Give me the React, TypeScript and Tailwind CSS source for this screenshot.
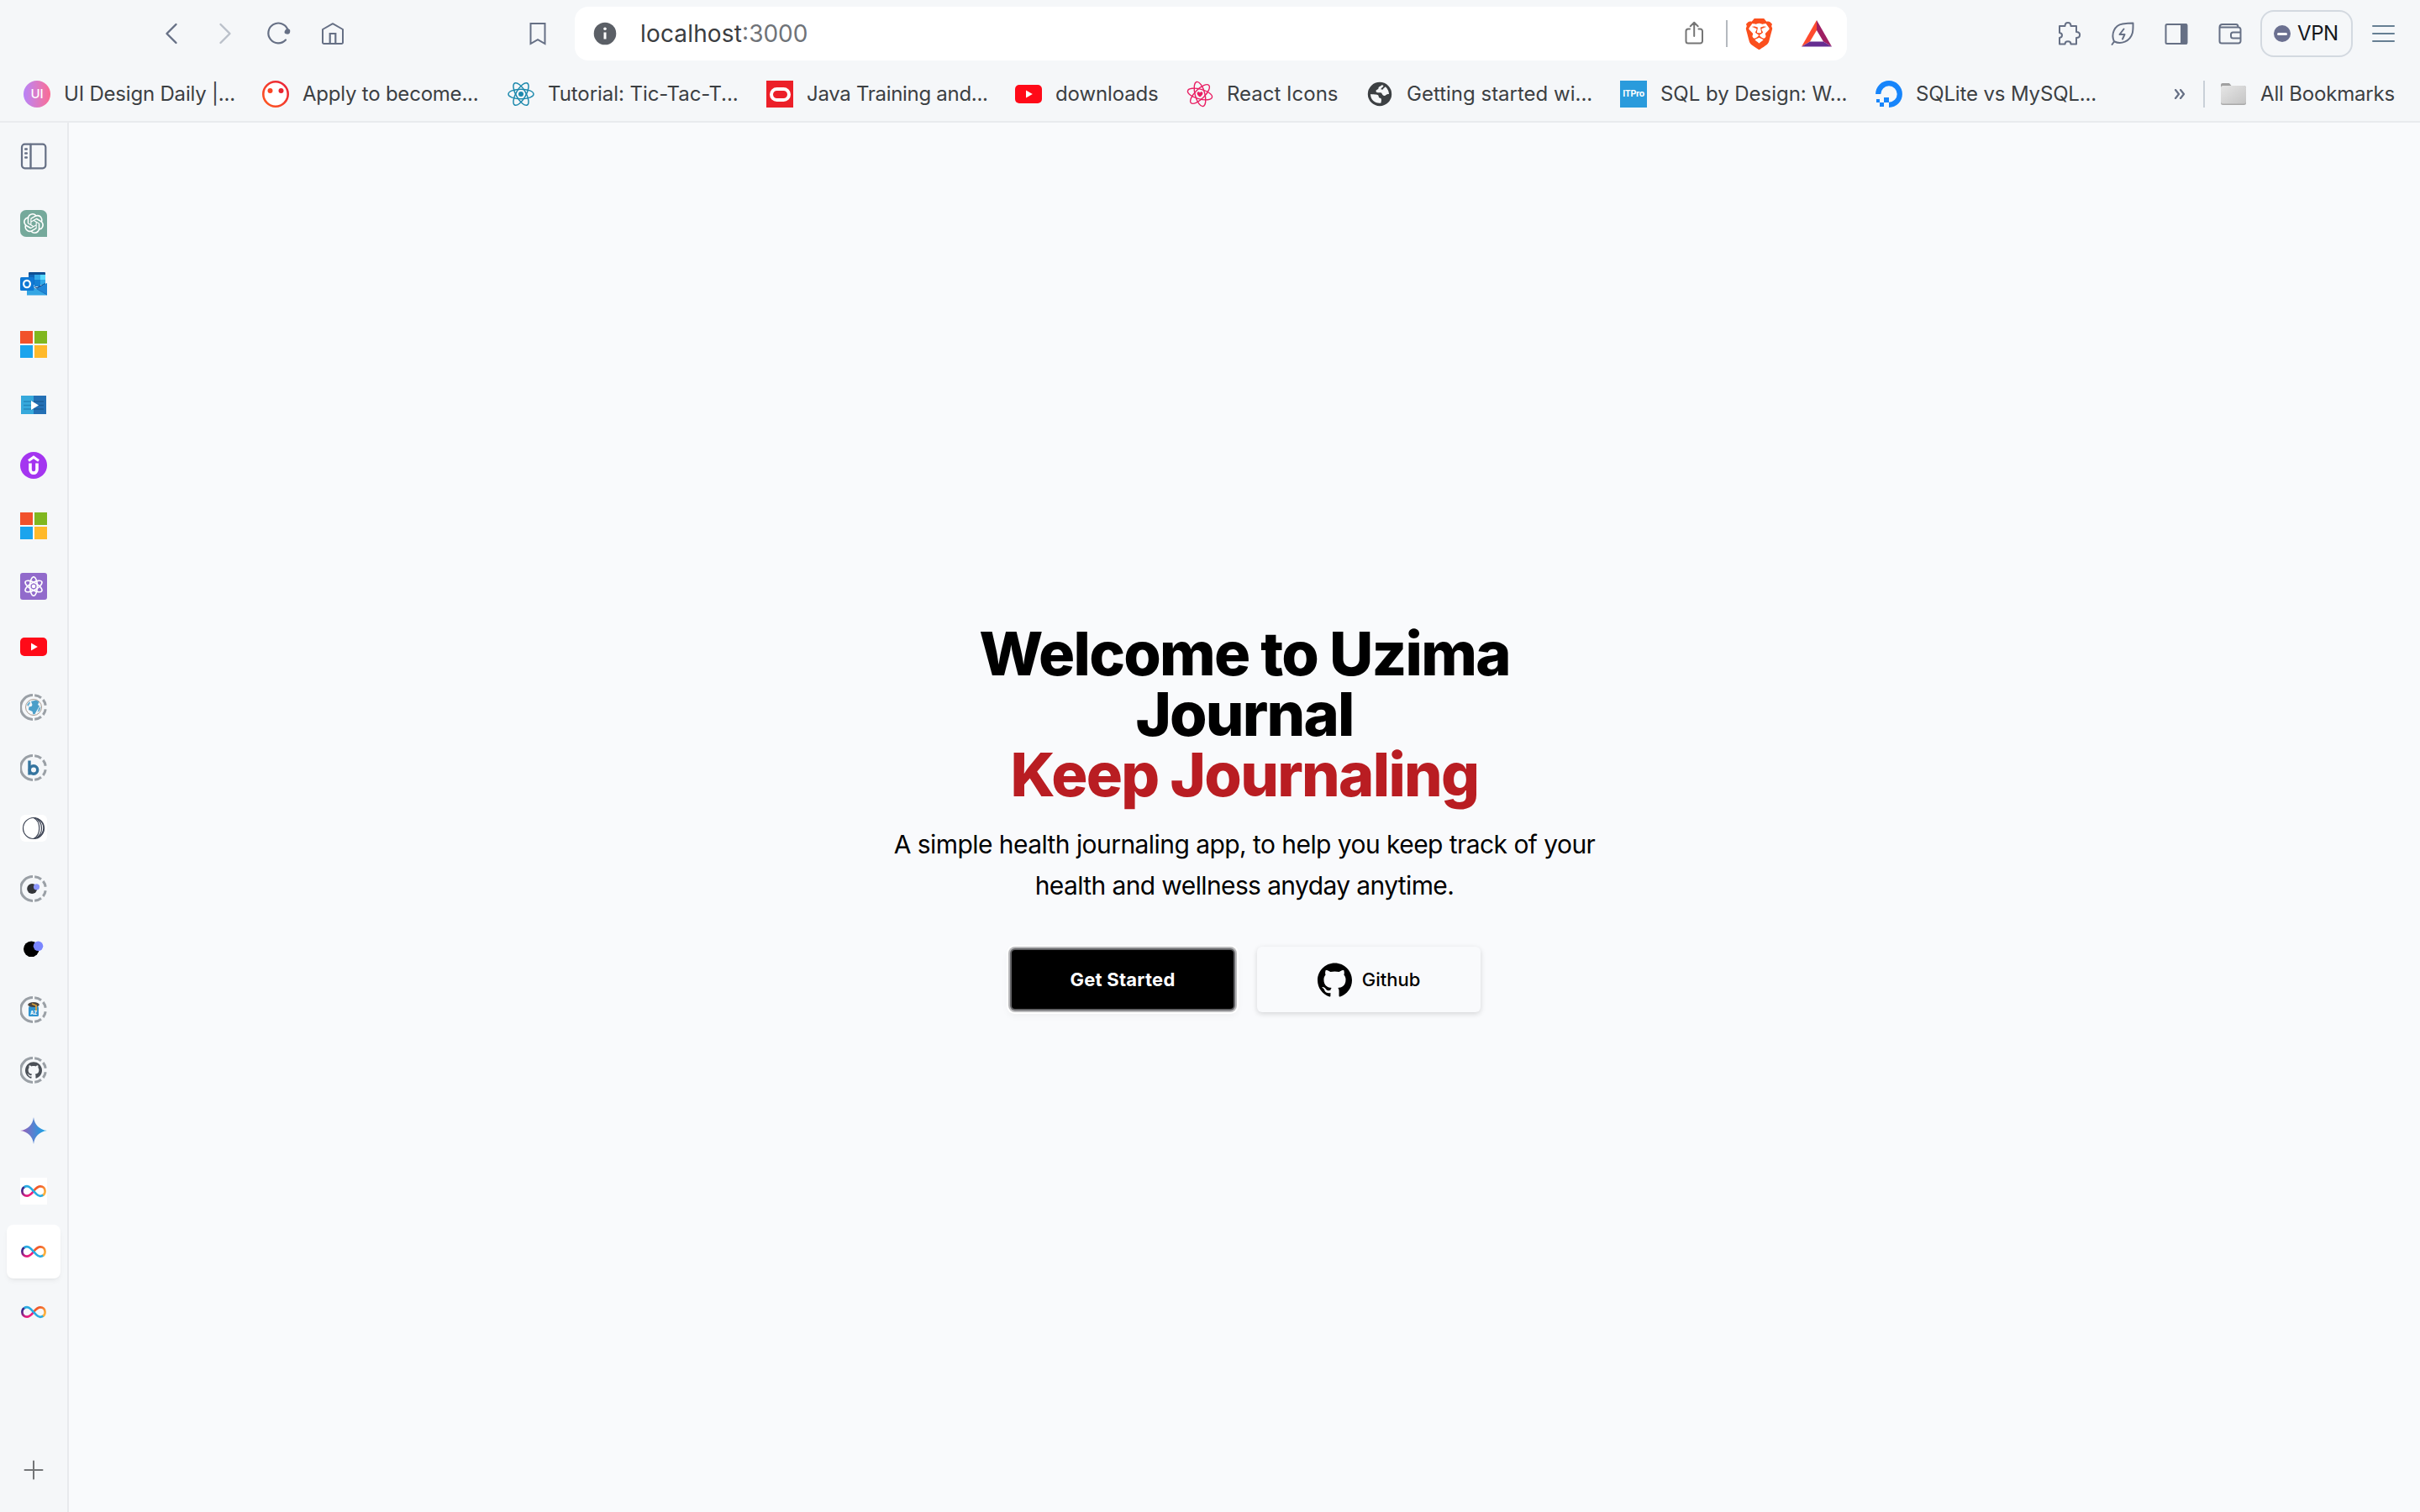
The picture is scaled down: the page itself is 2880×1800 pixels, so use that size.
import type { ReactNode } from "react";
import { SiOpenai, SiGithub, SiBrave } from "react-icons/si";

const stroke = { fill: "none", stroke: "#667085", strokeWidth: 2, strokeLinecap: "round", strokeLinejoin: "round" } as const;

function Atom({ color, className, tilt = 0, heart = false, width = 1.5 }: { color: string; className: string; tilt?: number; heart?: boolean; width?: number }) {
  return (
    <svg viewBox="0 0 32 32" className={className}>
      <g transform={`rotate(${tilt} 16 16)`} fill="none" stroke={color} strokeWidth={width}>
        <ellipse cx="16" cy="16" rx="15" ry="5.8" />
        <ellipse cx="16" cy="16" rx="15" ry="5.8" transform="rotate(60 16 16)" />
        <ellipse cx="16" cy="16" rx="15" ry="5.8" transform="rotate(120 16 16)" />
      </g>
      {heart ? (
        <path d="M16 19.6c-2.2-1.7-3.4-2.9-3.4-4.4 0-2 2.5-2.5 3.4-.8.9-1.7 3.4-1.2 3.4.8 0 1.5-1.2 2.7-3.4 4.4z" fill={color} />
      ) : (
        <circle cx="16" cy="16" r="3" fill={color} />
      )}
    </svg>
  );
}

function YouTube() {
  return (
    <svg viewBox="0 0 32 32" className="size-8">
      <rect y="5" width="32" height="22" rx="5" fill="#ff0a18" />
      <path d="M13 11.5v9l7.8-4.5z" fill="#fff" />
    </svg>
  );
}

function Microsoft() {
  return (
    <div className="grid size-8 grid-cols-2 gap-[2px]">
      <div className="bg-[#f1512b]" />
      <div className="bg-[#80b71f]" />
      <div className="bg-[#1aa4ed]" />
      <div className="bg-[#ffb92a]" />
    </div>
  );
}

function Ring({ children }: { children?: ReactNode }) {
  return (
    <svg viewBox="0 0 32 32" className="size-8">
      <g fill="none" stroke="#9aa0a6" strokeWidth="3">
        <path d="M15 1.6A14.4 14.4 0 0 0 15 30.4" />
        <path d="M17.2 1.7A14.4 14.4 0 0 1 25 4.7" />
        <path d="M27.3 7A14.4 14.4 0 0 1 30.2 13.8" />
        <path d="M17.2 30.3A14.4 14.4 0 0 0 25 27.3" />
        <path d="M27.3 25A14.4 14.4 0 0 0 30.2 18.2" />
      </g>
      {children}
    </svg>
  );
}

function Infinite({ id }: { id: string }) {
  return (
    <svg viewBox="0 0 32 32" className="size-8">
      <defs>
        <linearGradient id={`${id}-pink`} x1="0" y1="0" x2="1" y2="1">
          <stop offset="0.15" stopColor="#3b2a8c" />
          <stop offset="0.55" stopColor="#c51f84" />
          <stop offset="0.8" stopColor="#f0207c" />
        </linearGradient>
        <linearGradient id={`${id}-orange`} x1="0" y1="0" x2="1" y2="1">
          <stop offset="0.25" stopColor="#f15a2b" />
          <stop offset="0.8" stopColor="#fbb03b" />
        </linearGradient>
      </defs>
      <g fill="none" strokeWidth="2.7" transform="translate(0 8)">
        <path d="M15.6 8.6C12.5 12.2 10.6 13.6 8 13.6 4.6 13.6 2.4 11.2 2.4 8 2.4 5.4 3.8 3.4 6 2.7" stroke={`url(#${id}-pink)`} />
        <path d="M16.4 7.4C19.5 3.8 21.4 2.4 24 2.4c3.4 0 5.6 2.4 5.6 5.6 0 2.6-1.4 4.6-3.6 5.3" stroke={`url(#${id}-orange)`} />
        <path d="M4.8 3.4C7 1.8 10.2 2 12.8 4.6L19.2 11.4C21.8 14 25 14.2 27.2 12.6" stroke="#29abe2" />
      </g>
    </svg>
  );
}

function Outlook() {
  return (
    <svg viewBox="0 0 32 32" className="size-8">
      <rect x="10" y="2" width="20" height="5" rx="1" fill="#0f4f93" />
      <rect x="10" y="5" width="7" height="12" fill="#1066b8" />
      <rect x="17" y="5" width="7" height="6" fill="#32a9e7" />
      <rect x="24" y="5" width="6" height="6" fill="#58d9fd" />
      <rect x="17" y="11" width="7" height="8" fill="#1580d4" />
      <rect x="24" y="11" width="6" height="6" fill="#32a9e7" />
      <path d="M16 19l4 3 10-5.500v-1.500l-10 5z" fill="#0f4f93" />
      <path d="M8 17l12 5 12-7v14.500H8z" fill="#35a6e4" />
      <path d="M32 15v14L19.500 21.900z" fill="#2186d6" />
      <path d="M20 22l12 7" stroke="#1a6cb8" strokeWidth="0.800" />
      <rect y="8" width="16.500" height="16" rx="1.500" fill="#0f78d4" />
      <ellipse cx="8" cy="16" rx="3.900" ry="4.200" fill="none" stroke="#fff" strokeWidth="2.200" />
    </svg>
  );
}

function Stream() {
  return (
    <svg viewBox="0 0 32 32" className="size-8">
      <rect x="1" y="5" width="15" height="22" fill="#36a9dc" />
      <rect x="16" y="5" width="15" height="22" fill="#2470b5" />
      <path d="M4 12h12M4 16.500h12M4 21h12" stroke="#2488bd" strokeWidth="1.500" />
      <path d="M16 12h12M16 16.500h12M16 21h12" stroke="#1a5c98" strokeWidth="1.500" />
      <path d="M13 11v11l9-5.500z" fill="#fff" />
    </svg>
  );
}

const apps: { name: string; active?: boolean; icon: ReactNode }[] = [
  {
    name: "chat",
    icon: (
      <div className="flex size-8 items-center justify-center rounded-[7px] rounded-br-none bg-[#75a99b] text-white">
        <SiOpenai className="size-6" />
      </div>
    ),
  },
  { name: "outlook", icon: <Outlook /> },
  { name: "microsoft", icon: <Microsoft /> },
  { name: "stream", icon: <Stream /> },
  {
    name: "udemy",
    icon: (
      <svg viewBox="0 0 32 32" className="size-8">
        <circle cx="16" cy="16" r="16" fill="#a435f0" />
        <path d="M10 10.500L16 6.200 22 10.500" fill="none" stroke="#fff" strokeWidth="3" />
        <path d="M12 13.500v7.500c0 5.500 8 5.500 8 0v-7.500" fill="none" stroke="#fff" strokeWidth="3.600" />
      </svg>
    ),
  },
  { name: "microsoft-2", icon: <Microsoft /> },
  {
    name: "atom",
    icon: (
      <div className="flex size-8 items-center justify-center rounded-[3px] bg-[#916acb]">
        <Atom color="#fff" className="size-6" tilt={30} width={2.2} />
      </div>
    ),
  },
  { name: "youtube", icon: <YouTube /> },
  {
    name: "globe",
    icon: (
      <Ring>
        <circle cx="16" cy="16" r="9.500" fill="#f4f7f9" stroke="#a89c93" strokeWidth="1" />
        <path d="M13 9l6-1.500 3.500 2-1.500 3.500 2 1.500-3 5-2.500 4.500-2 .5-1-3.500-4.500-2 .5-3.500 3-.5 1-2z" fill="#4b9fc9" />
        <path d="M22 17l2.500-2-1 5-3 2zM8 13l3-4 1 2-2.500 4z" fill="#6db0d2" />
      </Ring>
    ),
  },
  {
    name: "bet",
    icon: (
      <Ring>
        <path d="M11 7.500v17" stroke="#35759f" strokeWidth="3.400" />
        <circle cx="16" cy="18.500" r="4.700" fill="none" stroke="#35759f" strokeWidth="3.400" />
      </Ring>
    ),
  },
  {
    name: "moon",
    icon: (
      <svg viewBox="0 0 32 32" className="size-8 rounded-md bg-white">
        <g fill="none" stroke="#3d4454" strokeWidth="1.200">
          <circle cx="16" cy="16" r="12.500" />
          <path d="M16 3.500C25 8 25 24 16 28.500" />
          <path d="M18 3.700C28 9 28 23 18 28.300" />
          <path d="M20 4.200C31 10 30 22 20 27.800" />
        </g>
      </svg>
    ),
  },
  {
    name: "dots-small",
    icon: (
      <Ring>
        <circle cx="14.200" cy="16" r="6" fill="#333539" />
        <circle cx="19.500" cy="13.800" r="3.600" fill="#8c96fb" />
      </Ring>
    ),
  },
  {
    name: "dots",
    icon: (
      <svg viewBox="0 0 32 32" className="size-8">
        <circle cx="13.300" cy="15.800" r="9.300" fill="#000" />
        <circle cx="21.500" cy="12.300" r="5.800" fill="#7a86ff" />
      </svg>
    ),
  },
  {
    name: "jar",
    icon: (
      <Ring>
        <rect x="10" y="12" width="12" height="12" rx="1.500" fill="#2f93cf" />
        <ellipse cx="16" cy="10" rx="6.800" ry="3" fill="#4a443f" />
        <path d="M14 9l5 2v6" fill="none" stroke="#d9a23c" strokeWidth="1.800" />
        <text x="16" y="22" textAnchor="middle" fontFamily="Inter, sans-serif" fontWeight="800" fontSize="5.500" fill="#fff">AZ</text>
      </Ring>
    ),
  },
  {
    name: "github",
    icon: (
      <Ring>
        <SiGithub x="6" y="6" size={20} color="#4b5057" />
      </Ring>
    ),
  },
  {
    name: "gemini",
    icon: (
      <svg viewBox="0 0 32 32" className="size-8">
        <defs>
          <linearGradient id="gemini-fill" x1="0" y1="0" x2="1" y2="0">
            <stop offset="0" stopColor="#a05bb5" />
            <stop offset="0.45" stopColor="#5b7fcf" />
            <stop offset="1" stopColor="#0fa8e8" />
          </linearGradient>
        </defs>
        <path d="M16 0C17 9 23 15 32 16 23 17 17 23 16 32 15 23 9 17 0 16 9 15 15 9 16 0z" fill="url(#gemini-fill)" />
      </svg>
    ),
  },
  { name: "icp-1", icon: <div className="bg-white"><Infinite id="loop-1" /></div> },
  { name: "icp-2", active: true, icon: <Infinite id="loop-2" /> },
  { name: "icp-3", icon: <Infinite id="loop-3" /> },
];

const bookmarks: { label: string; cls: string; icon: ReactNode }[] = [
  {
    label: "UI Design Daily |...",
    cls: "w-[284px] tracking-[-0.2px]",
    icon: <div className="flex size-8 items-center justify-center rounded-full bg-linear-to-r from-[#b882f8] to-[#fb6a92] text-[15px] font-medium tracking-normal text-white">UI</div>,
  },
  {
    label: "Apply to become...",
    cls: "w-[292px] tracking-[-0.22px]",
    icon: (
      <svg viewBox="0 0 32 32" className="size-8">
        <defs>
          <linearGradient id="face-ring" x1="1" y1="0" x2="0" y2="1">
            <stop offset="0" stopColor="#e8203a" />
            <stop offset="1" stopColor="#ff5a1f" />
          </linearGradient>
        </defs>
        <circle cx="16" cy="16" r="14.700" fill="#fff" stroke="url(#face-ring)" strokeWidth="2.600" />
        <circle cx="9.500" cy="12" r="3" fill="#fb4422" />
        <circle cx="22.500" cy="12" r="3" fill="#e8252f" />
      </svg>
    ),
  },
  { label: "Tutorial: Tic-Tac-T...", cls: "w-[308px] tracking-[-0.06px]", icon: <Atom color="#1d89ad" className="size-8" tilt={0} /> },
  {
    label: "Java Training and...",
    cls: "w-[296px] tracking-[-0.3px]",
    icon: (
      <div className="flex size-8 items-center justify-center bg-[#ec2029]">
        <div className="h-[17px] w-[25px] rounded-full border-4 border-white" />
      </div>
    ),
  },
  { label: "downloads", cls: "w-[204px] tracking-[-0.13px]", icon: <YouTube /> },
  { label: "React Icons", cls: "w-[214px]", icon: <Atom color="#e91e63" className="size-8" tilt={15} heart width={1.4} /> },
  {
    label: "Getting started wi...",
    cls: "w-[302px]",
    icon: (
      <svg viewBox="0 0 32 32" className="size-8">
        <circle cx="16" cy="16" r="14.200" fill="#3c4043" />
        <path d="M5 16c3 .5 8 .2 9 1.200 1.200 1 .2 3.300 2.500 3.500 1.800.2 1.800 3 .8 6C10.500 27.500 5 23 5 16z" fill="#f5f7f9" />
        <path d="M18.500 5c-.5 2-4 1.500-4 4 0 1.800-3 1.500-3 3.500s2.500 1.800 5.500 1.800c2.200 0 1.500 3.700 4.500 3.700 2 0 1.500-2 5.500-2C27 12 24.500 8.500 22.500 7.200c-1 1.800-2.500 1.300-2.500 3.300h-2.500c0-2.500 2.500-2 3-4.500z" fill="#f5f7f9" />
      </svg>
    ),
  },
  {
    label: "SQL by Design: W...",
    cls: "w-[304px] tracking-[-0.03px]",
    icon: <div className="flex size-8 items-center justify-center bg-[#2a9bdc] text-[10.500px] font-bold tracking-[-0.3px] text-white">ITPro</div>,
  },
  {
    label: "SQLite vs MySQL...",
    cls: "w-[340px] tracking-[-0.15px]",
    icon: (
      <svg viewBox="0 0 32 32" className="size-8">
        <path d="M3.200 16A12.800 12.800 0 1 1 16 28.800" fill="none" stroke="#1785fb" strokeWidth="6.200" />
        <path d="M10 20h6v6h-6zM5 26h5v5H5zM1 22h4v4H1z" fill="#1785fb" />
      </svg>
    ),
  },
];

function Toolbar() {
  return (
    <div className="flex h-20 items-center">
      <div className="flex w-[684px] items-center pl-[188px]">
        <svg viewBox="0 0 32 32" className="size-8"><path d="M21.500 5L10.500 16 21.500 27" {...stroke} strokeWidth="2.400" /></svg>
        <svg viewBox="0 0 32 32" className="ml-8 size-8"><path d="M10.500 5L21.500 16 10.500 27" {...stroke} strokeWidth="2.400" stroke="#bac0c9" /></svg>
        <svg viewBox="0 0 32 32" className="ml-8 size-8">
          <path d="M24 23.500A11.900 11.900 0 1 1 26.300 11" {...stroke} strokeWidth="2.200" />
          <path d="M26 9.500l2.800 1.800c.8.600.6 4.200-.8 5-1.500.8-4.800.2-5.300-1-.6-1.500.5-3.800 3.300-5.800z" fill="#667085" />
        </svg>
        <svg viewBox="0 0 32 32" className="ml-8 size-8">
          <path d="M4 11L16 4.200 28 11V26.500a1.500 1.500 0 0 1-1.500 1.500h-21A1.500 1.500 0 0 1 4 26.500z" {...stroke} />
          <path d="M12.700 28V16h6.600v12" {...stroke} strokeWidth="2.200" strokeLinejoin="miter" />
        </svg>
        <svg viewBox="0 0 32 32" className="mr-[28px] ml-auto size-8"><path d="M7.500 4h17v24l-8.500-4.800L7.500 28z" {...stroke} strokeLinejoin="miter" /></svg>
      </div>
      <div className="flex h-16 w-[1514px] items-center rounded-[16px] bg-white pr-[18px] pl-[22px]">
        <svg viewBox="0 0 28 28" className="size-7">
          <circle cx="14" cy="14" r="13.300" fill="#5b5f66" />
          <path d="M14 12.500v8" stroke="#fff" strokeWidth="3" />
          <circle cx="14" cy="8.300" r="1.800" fill="#fff" />
        </svg>
        <div className="ml-[28px] text-[28px] text-[#3a3d41]">
          <span className="tracking-[0.16px]">localhost</span>
          <span className="text-[#6f7378]">:3000</span>
        </div>
        <svg viewBox="0 0 32 32" className="ml-auto size-8">
          <path d="M11 10.500H9A2.500 2.500 0 0 0 6.500 13v12A2.500 2.500 0 0 0 9 27.500h14.500A2.500 2.500 0 0 0 26 25V13a2.500 2.500 0 0 0-2.500-2.500H21.500M16.200 19V3M11.700 7.200L16.200 2.800l4.500 4.400" {...stroke} stroke="#757575" />
        </svg>
        <div className="ml-[22px] h-8 w-[2px] bg-[#b4b9bf]" />
        <SiBrave className="ml-[19px] size-[37px] text-[#fb4f1d]" />
        <svg viewBox="0 0 36 32" className="ml-[32px] h-8 w-9">
          <path d="M18 0L0 31.500 10 25.500 18 12z" fill="#ff4b2e" />
          <path d="M18 0l18 31.500-10-6L18 12z" fill="#9e1f63" />
          <path d="M0 31.500h36l-10-6H10z" fill="#662d91" />
        </svg>
      </div>
      <div className="flex flex-1 items-center justify-end pr-[30px]">
        <svg viewBox="0 0 32 32" className="size-8">
          <path d="M5 7h6.500c0-5.500 7-5.500 7 0H25v7c5.500 0 5.500 7 0 7v7.500h-6.500c0-4.500-7-4.500-7 0H5v-7.500c4-.5 4-5.500 0-6z" {...stroke} />
        </svg>
        <svg viewBox="0 0 32 32" className="ml-8 size-8">
          <path d="M3.500 29l2.500-3.500C2 17 6 6 16 4.500c5-.8 9-1 12.500-1 0 4 .3 8-.8 12C25 25.500 14 29 6.500 25.500" {...stroke} />
          <path d="M17.500 10.500l-5 6.500h6l-2.500 5.500" {...stroke} />
        </svg>
        <svg viewBox="0 0 32 32" className="ml-8 size-8">
          <rect x="3.500" y="5" width="25" height="23" rx="1.500" {...stroke} />
          <rect x="21" y="4.500" width="8" height="24" rx="1" fill="#667085" />
        </svg>
        <svg viewBox="0 0 32 32" className="ml-8 size-8">
          <path d="M3.500 8.500V25A2.500 2.500 0 0 0 6 27.500h20a2.500 2.500 0 0 0 2.500-2.500V11A2.500 2.500 0 0 0 26 8.500zM3.500 8.500C3.500 6 5 5 7 5h16c1.500 0 2.500 1 2.500 3M28 14.500H19.500A2.500 2.500 0 0 0 17 17v2a2.500 2.500 0 0 0 2.500 2.500H28" {...stroke} />
        </svg>
        <div className="ml-5 flex h-14 w-[110px] items-center rounded-[16px] border-2 border-[#d3d9e0] pl-[14px] text-2xl tracking-[-0.4px] text-[#14161c]">
          <div className="flex size-5 items-center justify-center rounded-full bg-[#6b7090]"><div className="h-[3px] w-3 rounded-full bg-white" /></div>
          <span className="ml-2">VPN</span>
        </div>
        <div className="ml-[23px] flex w-[27px] flex-col gap-[7px]">
          <div className="h-[2px] rounded-full bg-[#667f93]" />
          <div className="h-[2px] rounded-full bg-[#667f93]" />
          <div className="h-[2px] rounded-full bg-[#667f93]" />
        </div>
      </div>
    </div>
  );
}

function BookmarksBar() {
  return (
    <div className="flex h-16 items-center pl-7 text-2xl text-[#3c4043]">
      {bookmarks.map((b) => (
        <div key={b.label} className={`flex shrink-0 items-center gap-4 whitespace-nowrap ${b.cls}`}>
          <div className="shrink-0">{b.icon}</div>
          {b.label}
        </div>
      ))}
      <svg viewBox="0 0 14 12" className="ml-[15px] h-3 w-[14px]">
        <path d="M2 1l4 5-4 5M8 1l4 5-4 5" {...stroke} strokeWidth="2.200" />
      </svg>
      <div className="ml-[21px] h-8 w-[2px] bg-[#c9d0d8]" />
      <svg viewBox="0 0 32 28" className="ml-[18px] h-7 w-8">
        <defs>
          <linearGradient id="folder-fill" x1="0" y1="0" x2="1" y2="1">
            <stop offset="0" stopColor="#e6e6e6" />
            <stop offset="1" stopColor="#c4c4c4" />
          </linearGradient>
        </defs>
        <path d="M1 8V3a2 2 0 0 1 2-2h8l2.500 3H29v4z" fill="#a0a0a0" />
        <rect x="1" y="4" width="30" height="23" rx="2.500" fill="#a9a9a9" />
        <rect x="1" y="4" width="30" height="21.500" rx="2.500" fill="url(#folder-fill)" />
      </svg>
      <span className="ml-[16px] whitespace-nowrap tracking-[-0.18px]">All Bookmarks</span>
    </div>
  );
}

function Sidebar() {
  return (
    <aside className="flex w-[82px] shrink-0 flex-col border-r-2 border-[#e8eaed] bg-[#f5f7f9]">
      <div className="mb-1 flex h-20 items-center justify-center">
        <svg viewBox="0 0 32 32" className="size-8">
          <rect x="2" y="1.700" width="28.300" height="28.600" rx="3.500" {...stroke} strokeWidth="2.200" />
          <path d="M12.500 2v28M6.200 7.500h1.600M6.200 12.500h1.600M6.200 17.500h1.600" {...stroke} strokeWidth="2.400" />
        </svg>
      </div>
      {apps.map((a) => (
        <div key={a.name} className="flex h-[72px] items-center justify-center">
          {a.active ? <div className="flex size-16 items-center justify-center rounded-lg bg-white shadow-md shadow-black/5">{a.icon}</div> : a.icon}
        </div>
      ))}
      <div className="mt-auto mb-[38px] flex justify-center">
        <svg viewBox="0 0 24 24" className="size-6"><path d="M12 1.500v21M1.500 12h21" {...stroke} stroke="#737577" /></svg>
      </div>
    </aside>
  );
}

export default function App() {
  return (
    <div className="flex h-[1800px] w-[2880px] flex-col overflow-hidden bg-[#f5f7f9] font-[Inter,sans-serif]">
      <header className="h-[146px] shrink-0 border-b-2 border-[#e9ebee]">
        <Toolbar />
        <BookmarksBar />
      </header>
      <div className="flex flex-1">
        <Sidebar />
        <main className="flex flex-1 flex-col items-center bg-[#f9fafc] pt-[596px] text-center text-black">
          <h1 className="text-[72px] leading-[72px] font-extrabold tracking-[-1.8px]">
            Welcome to Uzima
            <br />
            Journal
            <br />
            <span className="tracking-[-1.7px] text-[#b91d22]">Keep Journaling</span>
          </h1>
          <p className="mt-[23px] text-[30px] leading-[49px] tracking-[-0.56px]">
            A simple health journaling app, to help you keep track of your
            <br />
            <span className="tracking-[-0.62px]">health and wellness anyday anytime.</span>
          </p>
          <div className="mt-[48px] mr-[-4px] flex items-center gap-7">
            <button className="h-[70px] w-[264px] rounded-[4px] bg-black text-[22px] font-bold tracking-[0.24px] text-white shadow-[0_0_0_2px_#636366,0_0_0_4px_#b9b9bb,0_0_0_6px_#ffffff,0_4px_10px_4px_#0000000d]">Get Started</button>
            <button className="flex h-[78px] w-[266px] items-center justify-center gap-3 rounded-md bg-[#f9fafc] text-[22px] font-medium shadow-[0_2px_6px_#00000026]">
              <SiGithub className="size-[41px]" />
              Github
            </button>
          </div>
        </main>
      </div>
    </div>
  );
}
